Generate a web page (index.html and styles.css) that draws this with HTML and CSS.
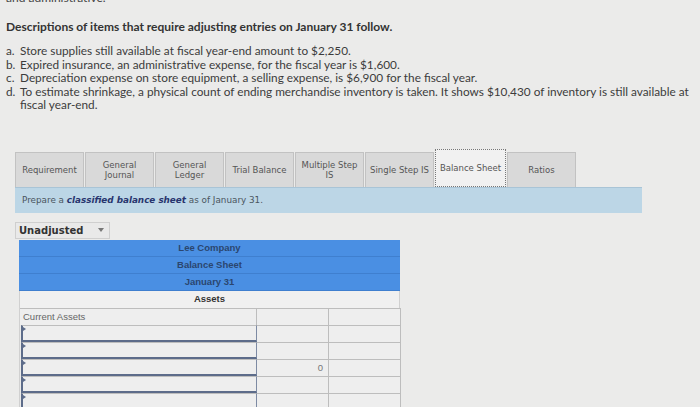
FILE: index.html
```
<!DOCTYPE html>
<html>
<head>
<meta charset="utf-8">
<link rel="stylesheet" href="styles.css">
</head>
<body>
<div class="cut"><span>and administrative.</span></div>
<h1 class="title">Descriptions of items that require adjusting entries on January 31 follow.</h1>
<ol class="items">
  <li><span class="lt">a.</span><span>Store supplies still available at fiscal year-end amount to $2,250.</span></li>
  <li><span class="lt">b.</span><span>Expired insurance, an administrative expense, for the fiscal year is $1,600.</span></li>
  <li><span class="lt">c.</span><span>Depreciation expense on store equipment, a selling expense, is $6,900 for the fiscal year.</span></li>
  <li><span class="lt">d.</span><span>To estimate shrinkage, a physical count of ending merchandise inventory is taken. It shows $10,430 of inventory is still available at fiscal year-end.</span></li>
</ol>
<div class="panel">
  <div class="tabs">
    <div class="tab">Requirement</div>
    <div class="tab">General<br>Journal</div>
    <div class="tab">General<br>Ledger</div>
    <div class="tab">Trial Balance</div>
    <div class="tab">Multiple Step<br>IS</div>
    <div class="tab">Single Step IS</div>
    <div class="tab active"><span>Balance Sheet</span></div>
    <div class="tab">Ratios</div>
  </div>
  <div class="info">Prepare a <b><i>classified balance sheet</i></b> as of January 31.</div>
  <div class="select"><span>Unadjusted</span><span class="arrow"></span></div>
  <div class="sheet">
    <div class="hrow">Lee Company</div>
    <div class="hrow">Balance Sheet</div>
    <div class="hrow">January 31</div>
    <div class="srow">Assets</div>
    <div class="grid">
      <div class="c1 label">Current Assets</div><div class="c2"></div><div class="c3"></div>
      <div class="c1 inp"></div><div class="c2"></div><div class="c3"></div>
      <div class="c1 inp"></div><div class="c2"></div><div class="c3"></div>
      <div class="c1 inp"></div><div class="c2 num">0</div><div class="c3"></div>
      <div class="c1 inp"></div><div class="c2"></div><div class="c3"></div>
      <div class="c1 inp"></div><div class="c2"></div><div class="c3"></div>
    </div>
  </div>
</div>
</body>
</html>
```
FILE: styles.css
```
html, body {
  margin: 0;
  padding: 0;
  background: #ebebea;
  overflow: hidden;
}
body {
  width: 700px;
  height: 407px;
  color: #3a3a3a;
  font-family: Lato, "Liberation Sans", sans-serif;
}
.cut {
  height: 5px;
  overflow: hidden;
  padding-left: 6px;
  font-size: 12px;
  color: #444;
}
.cut span {
  display: block;
  line-height: 12px;
  margin-top: -8px;
}
.title {
  margin: 15px 0 0 6px;
  font-size: 12px;
  font-weight: bold;
  line-height: 14px;
  color: #333;
}
.items {
  list-style: none;
  margin: 10px 0 0 0;
  padding: 0 0 0 6px;
  font-size: 11.8px;
  line-height: 13.5px;
  color: #3c3c3c;
}
.items li {
  display: flex;
}
.lt {
  flex: 0 0 14px;
}
.panel {
  margin: 40px 0 0 15px;
}
.tabs {
  display: flex;
  height: 35px;
  font-family: "DejaVu Sans", sans-serif;
  font-size: 8.5px;
  color: #555;
}
.tab {
  width: 69px;
  margin-right: 1px;
  box-sizing: border-box;
  background: #d9d9d9;
  border: 1px solid #c2c2c2;
  border-bottom: none;
  display: flex;
  align-items: center;
  justify-content: center;
  text-align: center;
  line-height: 10px;
}
.tab.active {
  background: #f1f1f1;
  border: 1px dotted #777;
  margin-top: -3px;
  height: 38px;
  width: 71px;
}
.info {
  width: 627px;
  height: 26px;
  box-sizing: border-box;
  background: #bcd6e6;
  border-top: 1px solid #a9c4d6;
  font-family: "DejaVu Sans", sans-serif;
  font-size: 8.8px;
  line-height: 25px;
  padding-left: 7px;
  color: #4a5560;
}
.info b {
  color: #28356e;
}
.select {
  margin-top: 9px;
  width: 95px;
  height: 17px;
  box-sizing: border-box;
  border: 1px solid #cfcfcf;
  background: #e9e9e9;
  display: flex;
  align-items: center;
  justify-content: space-between;
  padding: 0 5px 0 3px;
  font-family: "DejaVu Sans", sans-serif;
  font-weight: bold;
  font-size: 10px;
  color: #333;
}
.arrow {
  width: 0;
  height: 0;
  border-left: 3px solid transparent;
  border-right: 3px solid transparent;
  border-top: 4px solid #777;
}
.sheet {
  margin: 1px 0 0 4px;
  width: 381px;
  font-family: "Liberation Sans", Arial, sans-serif;
  font-size: 9.5px;
}
.hrow {
  height: 17px;
  box-sizing: border-box;
  background: #4a8fe3;
  border-bottom: 1px solid #3f7fcf;
  text-align: center;
  line-height: 16px;
  font-weight: bold;
  color: #2b466f;
}
.srow {
  height: 17px;
  box-sizing: border-box;
  background: #f0f0f0;
  border-left: 1px solid #d0d0d0;
  border-right: 1px solid #d0d0d0;
  text-align: center;
  line-height: 16px;
  font-weight: bold;
  color: #333;
}
.grid {
  display: grid;
  grid-template-columns: 237px 72px 72px;
  grid-auto-rows: 17px;
  border-left: 1px solid #d0d0d0;
}
.grid > div {
  box-sizing: border-box;
  border-top: 1px solid #bdbdbd;
  border-right: 1px solid #bdbdbd;
  background: #eeeeee;
}
.label {
  padding-left: 3px;
  line-height: 16px;
  color: #666;
}
.c1.inp {
  position: relative;
  border-left: 2px solid #5d6c8a;
  border-bottom: 2px solid #5d6c8a;
  border-right: 1px solid #7d8aa3;
  margin-left: 1px;
}
.c1.inp::before {
  content: "";
  position: absolute;
  left: 0;
  top: 1px;
  border-top: 2px solid transparent;
  border-bottom: 2px solid transparent;
  border-left: 3px solid #5d6c8a;
}
.num {
  text-align: right;
  padding-right: 5px;
  line-height: 16px;
  color: #777;
}
```
